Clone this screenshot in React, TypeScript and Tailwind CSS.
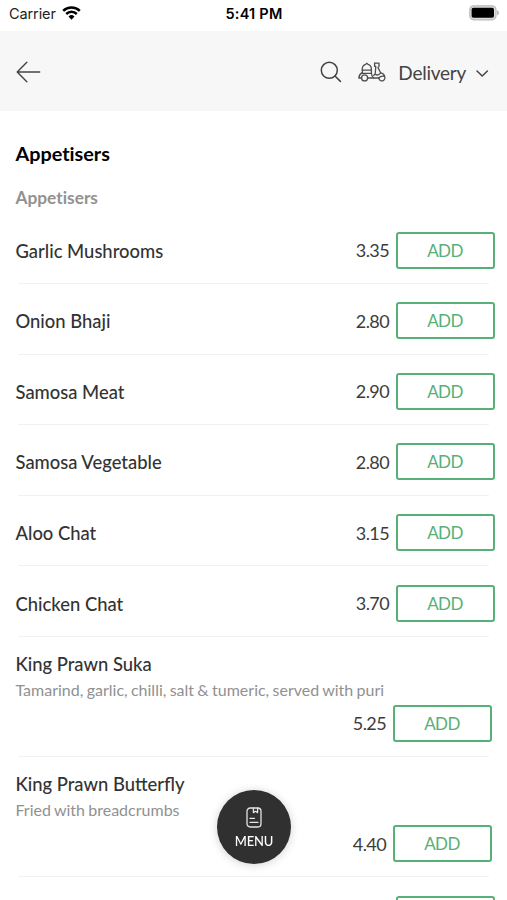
import { useState } from "react";

interface MenuItem {
  name: string;
  price: string;
  description?: string;
}

const ITEMS: MenuItem[] = [
  { name: "Garlic Mushrooms", price: "3.35" },
  { name: "Onion Bhaji", price: "2.80" },
  { name: "Samosa Meat", price: "2.90" },
  { name: "Samosa Vegetable", price: "2.80" },
  { name: "Aloo Chat", price: "3.15" },
  { name: "Chicken Chat", price: "3.70" },
  {
    name: "King Prawn Suka",
    price: "5.25",
    description: "Tamarind, garlic, chilli, salt & tumeric, served with puri",
  },
  {
    name: "King Prawn Butterfly",
    price: "4.40",
    description: "Fried with breadcrumbs",
  },
];

function StatusBar() {
  return (
    <div className="grid h-[31px] grid-cols-3 items-start bg-white pt-[5px] pr-[8px] pl-[9px] font-['Inter','Liberation_Sans',sans-serif] text-black">
      <div className="flex items-center gap-[6px]">
        <span className="text-[14.5px] leading-[18px] tracking-[-0.1px] text-[#222]">Carrier</span>
        <svg className="-mt-[2px]" width="19" height="14" viewBox="0 0 19 14" fill="none" stroke="#000" strokeWidth="2.5">
          <path d="M1.2 4.8a11.8 11.8 0 0 1 16.6 0" />
          <path d="M4.2 8a7.6 7.6 0 0 1 10.6 0" />
          <path d="M9.5 13.7 6.5 10.5a4.4 4.4 0 0 1 6 0z" fill="#000" stroke="none" />
        </svg>
      </div>
      <span className="text-center text-[14.5px] leading-[18px] font-semibold tracking-[0.25px]">5:41 PM</span>
      <svg className="justify-self-end" width="31" height="16" viewBox="0 0 31 16">
        <rect x="1.8" y="0.8" width="26.2" height="14" rx="4" fill="#ddd" stroke="#b9b9b9" strokeWidth="1.2" />
        <rect x="3.6" y="2.8" width="22.4" height="10" rx="1.8" fill="#000" />
        <path d="M29.2 5.3c1.2.5 1.6 1.5 1.6 2.5s-.4 2-1.6 2.5z" fill="#a9a9a9" />
      </svg>
    </div>
  );
}

function ScooterIcon() {
  return (
    <svg
      width="28"
      height="20"
      viewBox="0 0 28 20"
      fill="none"
      stroke="#4f4f4f"
      strokeWidth="1.3"
      strokeLinecap="round"
      strokeLinejoin="round"
    >
      <path d="M4.2 8.2V7.4c0-2.6 1.6-4.4 3.4-5l1.2-1.2L10 2.4c1.9.6 3.4 2.4 3.4 5v.8z" />
      <path d="M4.4 8.2v2.2C2.4 11.6 1 13.4.8 16h2.6M4.4 11.4h9V8.2M13.4 11.4c.2 2 .8 3.4 2 4.6" />
      <circle cx="6.6" cy="15.9" r="3" />
      <path d="M9.8 16H21" />
      <path d="M25.8 13.6a3 3 0 1 1-4.9 2.4" />
      <path d="M16.6 1.2H21v3.2l-1 1.2 2.6 5.2c2 .4 3.8 1.6 4 3.6-2.4-.6-4.4-.2-6 1.6" />
      <path d="M16.6 1.2v3.2h1.2l-.6 7.4-1.6 1.8M17.4 12.4c1.8 1 4 .2 5.2-1.6" />
    </svg>
  );
}

function Header() {
  return (
    <header className="flex h-20 items-center bg-[#f7f7f7] pt-[2px] pr-[18px] pl-4 text-[#444]">
      <svg width="25" height="22" viewBox="0 0 25 22" fill="none" stroke="#444" strokeWidth="1.4" strokeLinecap="round" strokeLinejoin="round">
        <path d="M23.7 11H1.2M10.8 1.2 1.2 11l9.6 9.8" />
      </svg>
      <div className="ml-auto flex items-center">
        <svg width="22" height="22" viewBox="0 0 22 22" fill="none" stroke="#444" strokeWidth="1.5" strokeLinecap="round">
          <circle cx="9.3" cy="9.3" r="8" />
          <path d="m15 15 5.4 5.4" />
        </svg>
        <div className="mr-px ml-4">
          <ScooterIcon />
        </div>
        <span className="ml-[11px] pt-px text-[19px] leading-6 tracking-[-0.25px]">Delivery</span>
        <svg className="mt-[3px] ml-[9px]" width="14" height="9" viewBox="0 0 14 9" fill="none" stroke="#444" strokeWidth="1.5" strokeLinecap="round" strokeLinejoin="round">
          <path d="m2 2 5.2 5L12.4 2" />
        </svg>
      </div>
    </header>
  );
}

function AddButton({ onAdd }: { onAdd: () => void }) {
  return (
    <button
      type="button"
      onClick={onAdd}
      className="h-[37px] w-[99px] rounded-[3px] border-2 border-[#57b077] bg-white pr-px text-[17px] leading-none tracking-[-0.6px] text-[#57b077]"
    >
      ADD
    </button>
  );
}

function Price({ value }: { value: string }) {
  return (
    <span className="text-[18px] leading-6 tracking-[-0.6px] text-[#3c3c3c]">{value}</span>
  );
}

function MenuRow({ item, onAdd }: { item: MenuItem; onAdd: () => void }) {
  if (item.description) {
    return (
      <li>
        <div className="h-[119.2px] pt-[15px] pr-[15px] pl-[15.5px]">
          <p className="text-[18.4px] leading-6 font-medium text-[#333]">{item.name}</p>
          <p className="mt-[2px] text-[16px] leading-6 [word-spacing:-0.8px] text-[#919191]">
            {item.description}
          </p>
          <div className="mt-[3px] flex items-center justify-end gap-[7px]">
            <Price value={item.price} />
            <AddButton onAdd={onAdd} />
          </div>
        </div>
        <div className="mr-[18px] ml-[18px] h-px bg-[#f1f1f1]" />
      </li>
    );
  }

  return (
    <li>
      <div className="flex h-[69.6px] items-center pt-[4px] pr-3 pl-[15.5px]">
        <p className="pt-px text-[18.4px] leading-6 font-medium text-[#333]">{item.name}</p>
        <div className="ml-auto flex items-center gap-[7px]">
          <Price value={item.price} />
          <AddButton onAdd={onAdd} />
        </div>
      </div>
      <div className="mr-[18px] ml-[18px] h-px bg-[#f1f1f1]" />
    </li>
  );
}

function MenuButton() {
  return (
    <button
      type="button"
      className="fixed top-[790px] left-[217px] flex h-[74px] w-[74px] flex-col items-center rounded-full bg-[#303030] pt-[17px] text-white shadow-[0_1px_10px_rgba(0,0,0,0.18)]"
    >
      <svg width="16" height="21" viewBox="0 0 16 21" fill="none" stroke="#e4e4e4" strokeWidth="1.3" strokeLinecap="round" strokeLinejoin="round">
        <rect x="1" y="1" width="14" height="19" rx="3.2" />
        <path d="M7.4 1.2v4.4l2.1-1.3 2.1 1.3V1.2M4 11.3h4.5M4 15.3h8" />
      </svg>
      <span className="mt-[6px] text-[13px] leading-[15px] font-medium tracking-[-0.2px]">MENU</span>
    </button>
  );
}

export default function App() {
  const [, setBasket] = useState<string[]>([]);

  const handleAdd = (name: string) => {
    setBasket((prev) => [...prev, name]);
  };

  return (
    <div className="h-[900px] w-full overflow-hidden bg-white font-['Lato',sans-serif]">
      <StatusBar />
      <Header />
      <main>
        <h1 className="pt-[29px] pl-[15.5px] text-[19.8px] leading-[26px] font-bold text-black [font-variant-ligatures:none]">
          Appetisers
        </h1>
        <h2 className="pt-5 pl-[15.5px] text-[17.3px] leading-6 font-bold text-[#929292] [font-variant-ligatures:none]">
          Appetisers
        </h2>
        <ul className="pt-[3.4px]">
          {ITEMS.map((item) => (
            <MenuRow key={item.name} item={item} onAdd={() => handleAdd(item.name)} />
          ))}
        </ul>
        {/* Top edge of the next row's button */}
        <div className="flex justify-end pt-[18.5px] pr-3">
          <div className="h-[5px] w-[99px] rounded-t-[3px] border-2 border-b-0 border-[#57b077]" />
        </div>
      </main>
      <MenuButton />
    </div>
  );
}
